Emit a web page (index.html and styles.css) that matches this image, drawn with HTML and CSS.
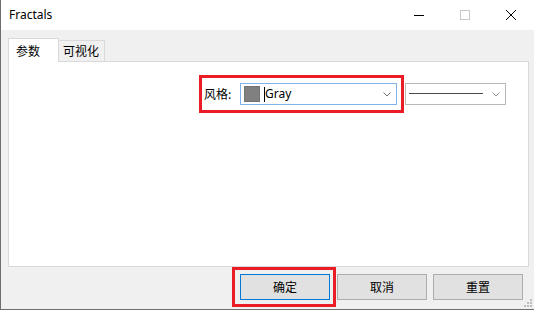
FILE: index.html
```html
<!DOCTYPE html>
<html>
<head>
<meta charset="utf-8">
<link rel="stylesheet" href="styles.css">
</head>
<body>
<div class="window">
  <div class="titlebar">
    <span class="title">Fractals</span>
    <div class="controls">
      <span class="ctl"><svg width="46" height="30" viewBox="0 0 46 30"><rect x="18" y="15" width="10" height="1" fill="#000"/></svg></span>
      <span class="ctl"><svg width="46" height="30" viewBox="0 0 46 30"><rect x="18.5" y="10.5" width="9" height="9" fill="none" stroke="#c8c8c8"/></svg></span>
      <span class="ctl"><svg width="46" height="30" viewBox="0 0 46 30"><path d="M18 10 L28 20 M28 10 L18 20" stroke="#000" stroke-width="1" fill="none"/></svg></span>
    </div>
  </div>
  <div class="content">
    <div class="tabs">
      <div class="tab tab-active">参数</div>
      <div class="tab tab-inactive">可视化</div>
    </div>
    <div class="panel">
      <div class="row">
        <div class="hl hl-style">
          <span class="label">风格:</span>
          <div class="combo combo-color">
            <span class="swatch"></span>
            <span class="caret"></span>
            <span class="combo-text">Gray</span>
            <svg class="chev" width="8" height="5" viewBox="0 0 8 5"><path d="M0.5 0.5 L4 4 L7.5 0.5" stroke="#707070" fill="none"/></svg>
          </div>
        </div>
        <div class="combo combo-line">
          <span class="linesample"></span>
          <svg class="chev" width="8" height="5" viewBox="0 0 8 5"><path d="M0.5 0.5 L4 4 L7.5 0.5" stroke="#909090" fill="none"/></svg>
        </div>
      </div>
    </div>
    <div class="buttons">
      <div class="hl hl-ok"><button class="btn btn-default">确定</button></div>
      <button class="btn btn-cancel">取消</button>
      <button class="btn btn-reset">重置</button>
    </div>
  </div>
  <svg class="grip" width="9" height="9" viewBox="0 0 9 9">
    <rect x="6" y="0" width="2" height="2" fill="#bdbdbd"/>
    <rect x="3" y="3" width="2" height="2" fill="#bdbdbd"/>
    <rect x="6" y="3" width="2" height="2" fill="#bdbdbd"/>
    <rect x="0" y="6" width="2" height="2" fill="#bdbdbd"/>
    <rect x="3" y="6" width="2" height="2" fill="#bdbdbd"/>
    <rect x="6" y="6" width="2" height="2" fill="#bdbdbd"/>
  </svg>
</div>
</body>
</html>
```

FILE: styles.css
```css
html, body {
  margin: 0;
  padding: 0;
  background: #ffffff;
}
.window {
  position: relative;
  width: 534px;
  height: 310px;
  box-sizing: border-box;
  border-left: 1px solid #6e6e6e;
  border-bottom: 1px solid #6e6e6e;
  display: flex;
  flex-direction: column;
  font-family: "Noto Sans CJK SC", "Noto Sans", sans-serif;
  font-size: 12px;
  color: #000;
}
.titlebar {
  height: 30px;
  flex: none;
  background: #fff;
  display: flex;
  align-items: center;
  justify-content: space-between;
}
.title {
  padding-left: 8px;
  font-family: "Noto Sans", "Open Sans", sans-serif;
  font-size: 12px;
  line-height: 30px;
}
.controls {
  display: flex;
  height: 30px;
}
.ctl {
  width: 46px;
  height: 30px;
  display: block;
}
.ctl svg {
  display: block;
}
.content {
  flex: 1;
  background: #f0f0f0;
  padding: 8px 0 2px 7px;
  display: flex;
  flex-direction: column;
}
.tabs {
  height: 23px;
  display: flex;
  align-items: flex-end;
  position: relative;
  z-index: 1;
}
.tab {
  box-sizing: border-box;
  border: 1px solid #d9d9d9;
  border-bottom: none;
  display: flex;
  align-items: center;
  line-height: 16px;
}
.tab-active {
  position: relative;
  z-index: 2;
  width: 51px;
  height: 24px;
  margin-bottom: -1px;
  background: #fff;
  padding-left: 7px;
}
.tab-inactive {
  width: 47px;
  height: 21px;
  margin-left: -1px;
  background: #f0f0f0;
  padding-left: 4px;
}
.panel {
  width: 521px;
  height: 206px;
  box-sizing: border-box;
  background: #fff;
  border: 1px solid #d9d9d9;
  flex: none;
}
.row {
  display: flex;
  justify-content: flex-end;
  align-items: center;
  padding: 13px 22px 0 0;
}
.hl {
  border: 3px solid #ea1c26;
  display: flex;
  align-items: center;
}
.hl-style {
  padding: 5px 4px 5px 2px;
}
.label {
  width: 36px;
  line-height: 16px;
}
.combo {
  box-sizing: border-box;
  height: 22px;
  background: #fff;
  display: flex;
  align-items: center;
}
.combo-color {
  width: 157px;
  border: 1px solid #7eb4ea;
  padding-left: 3px;
}
.swatch {
  width: 16px;
  height: 16px;
  box-sizing: border-box;
  background: #808080;
  border: 1px solid #737373;
  flex: none;
}
.caret {
  width: 1px;
  height: 15px;
  background: #000;
  margin-left: 4px;
  flex: none;
}
.combo-text {
  font-family: "Noto Sans", "Open Sans", sans-serif;
  font-size: 12px;
  line-height: 16px;
  margin-top: -1px;
}
.chev {
  margin-left: auto;
  margin-right: 5px;
  display: block;
  flex: none;
}
.combo-line {
  width: 101px;
  margin-left: 1px;
  border: 1px solid #b9b9b9;
  padding-left: 3px;
}
.linesample {
  width: 74px;
  height: 1px;
  background: #4a4a4a;
  margin-top: -1px;
}
.buttons {
  height: 40px;
  flex: none;
  display: flex;
  align-items: center;
  justify-content: flex-end;
  padding-right: 11px;
}
.hl-ok {
  padding: 4px 3px 4px 5px;
}
.btn {
  width: 90px;
  height: 26px;
  box-sizing: border-box;
  padding: 0;
  margin: 0;
  background: #e1e1e1;
  border: 1px solid #adadad;
  font-family: "Noto Sans CJK SC", sans-serif;
  font-size: 12px;
  color: #000;
  line-height: 16px;
}
.btn-default {
  border-color: #0078d7;
}
.btn-cancel {
  margin-left: 1px;
}
.btn-reset {
  margin-left: 6px;
}
.grip {
  position: absolute;
  right: 1px;
  bottom: 1px;
  display: block;
}
```
